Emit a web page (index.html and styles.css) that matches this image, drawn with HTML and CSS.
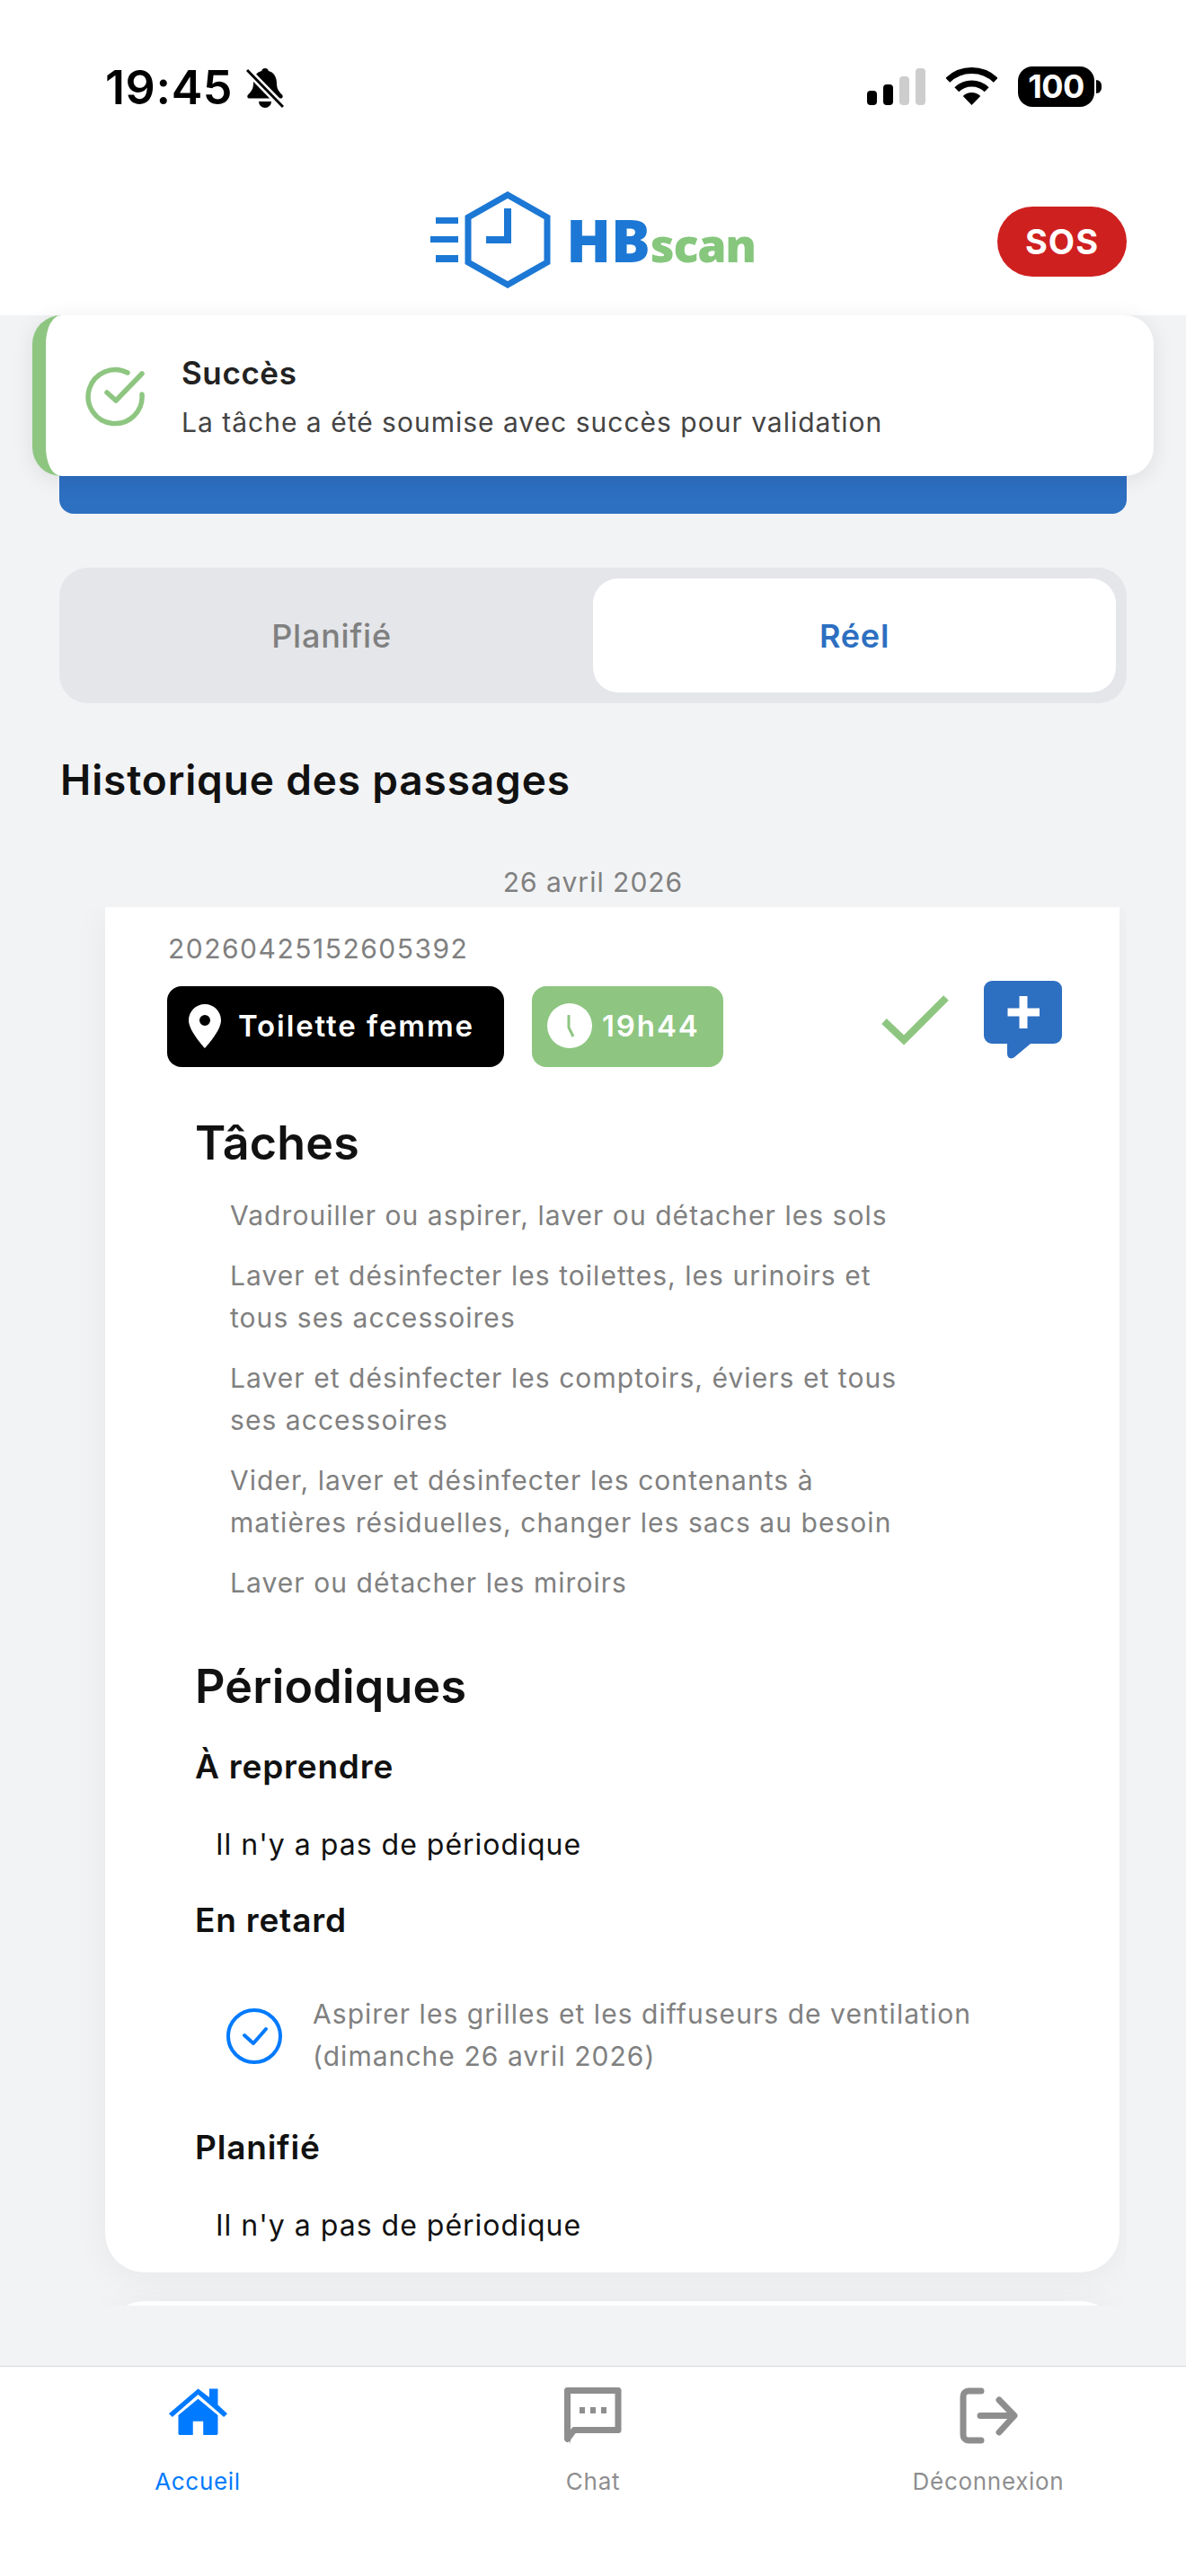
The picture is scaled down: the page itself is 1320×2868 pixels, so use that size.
FILE: index.html
```html
<!DOCTYPE html>
<html lang="fr">
<head>
<meta charset="utf-8">
<title>HBscan</title>
<link rel="stylesheet" href="styles.css">
</head>
<body>
<div class="app">
  <header class="top">
    <div class="status">
      <div class="status-left">
        <span class="time">19:45</span>
        <svg class="bell" viewBox="0 0 42 46"><path d="M21 1c-2 0-3.500 1.200-3.800 3C11 5.500 8 11 8 18c0 6-2.500 9-6 12.500-1 1-1 4 1 4h36c2 0 2-3 1-4C36.500 27 34 24 34 18c0-7-3-12.500-9.200-14-.3-1.800-1.800-3-3.800-3z"/><path d="M14 38a7 7 0 0 0 14 0z"/><path d="M1 3l40 41" stroke="#fff" stroke-width="8"/><path d="M1 3l40 41" stroke="#000" stroke-width="3"/></svg>
      </div>
      <div class="status-right">
        <div class="signal"><i class="bar b1"></i><i class="bar b2"></i><i class="bar b3 off"></i><i class="bar b4 off"></i></div>
        <svg class="wifi" viewBox="0 0 57 42"><path d="M1.800 14.300A38.500 38.500 0 0 1 55.200 14.300M11.800 24.700A24 24 0 0 1 45.200 24.700" fill="none" stroke="#000" stroke-width="7"/><path d="M28.500 42L18.800 32A14 14 0 0 1 38.200 32z"/></svg>
        <div class="battery"><span class="battery-body">100</span><i class="battery-nub"></i></div>
      </div>
    </div>
    <div class="brand-row">
      <div class="logo">
        <svg class="logo-mark" viewBox="0 0 134 108"><path d="M86 4l44 25v50l-44 25-44-25V29z" fill="none" stroke="#1c78d4" stroke-width="7"/><path d="M82 19h8v39H62v-8h20z" fill="#1c78d4"/><rect x="6" y="29" width="25" height="7" fill="#1c78d4"/><rect x="0" y="50" width="31" height="7" fill="#1c78d4"/><rect x="6" y="71" width="25" height="8" fill="#1c78d4"/></svg>
        <span class="logo-text"><span class="logo-hb">HB</span><span class="logo-scan">scan</span></span>
      </div>
      <button class="sos">SOS</button>
    </div>
  </header>

  <div class="toast">
    <svg class="toast-icon" viewBox="0 0 68 68"><path d="M47 8A30 30 0 1 0 63 32" fill="none" stroke="#8ec681" stroke-width="5.500" stroke-linecap="round"/><path d="M24 30l10 9 29-30" fill="none" stroke="#8ec681" stroke-width="5.500" stroke-linecap="round" stroke-linejoin="round"/></svg>
    <div class="toast-text">
      <div class="toast-title">Succès</div>
      <div class="toast-msg">La tâche a été soumise avec succès pour validation</div>
    </div>
  </div>

  <main class="main">
    <div class="blue-bar"></div>
    <div class="segment">
      <div class="seg-item">Planifié</div>
      <div class="seg-item active">Réel</div>
    </div>
    <h1 class="history-title">Historique des passages</h1>
    <div class="date">26 avril 2026</div>
    <div class="list">
      <article class="card">
        <div class="card-id">20260425152605392</div>
        <div class="pill-row">
          <div class="pill pill-black">
            <svg class="pin" viewBox="0 0 36 49"><path fill="#fff" fill-rule="evenodd" d="M18 0C8 0 0 8 0 18c0 12 18 31 18 31s18-19 18-31C36 8 28 0 18 0zm0 12a6 6 0 1 1 0 12 6 6 0 0 1 0-12z"/></svg>
            <span>Toilette femme</span>
          </div>
          <div class="pill pill-green">
            <svg class="clock" viewBox="0 0 50 50"><circle cx="25" cy="25" r="25" fill="#fff"/><path d="M24 13v14l5 10" fill="none" stroke="#8ec681" stroke-width="3"/></svg>
            <span>19h44</span>
          </div>
          <div class="card-actions">
            <svg class="done" viewBox="0 0 76 60"><path d="M3 30l22 21L72 4" fill="none" stroke="#8ec681" stroke-width="8"/></svg>
            <svg class="add-note" viewBox="0 0 87 87"><path fill="#2d6fc1" d="M9 0h69a9 9 0 0 1 9 9v52a9 9 0 0 1-9 9H52L34 85c-4 3-8 1-8-4V70H9a9 9 0 0 1-9-9V9a9 9 0 0 1 9-9z"/><path fill="#fff" d="M39.500 17h9v13.500H62v9H48.500V53h-9V39.500H26.500v-9h13z"/></svg>
          </div>
        </div>

        <section class="block">
          <h2 class="block-title">Tâches</h2>
          <ul class="tasks">
            <li>Vadrouiller ou aspirer, laver ou détacher les sols</li>
            <li>Laver et désinfecter les toilettes, les urinoirs et<br>tous ses accessoires</li>
            <li>Laver et désinfecter les comptoirs, éviers et tous<br>ses accessoires</li>
            <li>Vider, laver et désinfecter les contenants à<br>matières résiduelles, changer les sacs au besoin</li>
            <li>Laver ou détacher les miroirs</li>
          </ul>
        </section>

        <section class="block block-per">
          <h2 class="block-title">Périodiques</h2>
          <h3 class="sub sub-first">À reprendre</h3>
          <p class="none">Il n'y a pas de périodique</p>
          <h3 class="sub">En retard</h3>
          <div class="late">
            <svg class="late-check" viewBox="0 0 62 62"><circle cx="31" cy="31" r="29" fill="none" stroke="#007aff" stroke-width="4"/><path d="M20 30l10 9 14-16" fill="none" stroke="#007aff" stroke-width="4" stroke-linecap="round" stroke-linejoin="round"/></svg>
            <div class="late-text">Aspirer les grilles et les diffuseurs de ventilation<br>(dimanche 26 avril 2026)</div>
          </div>
          <h3 class="sub sub-plan">Planifié</h3>
          <p class="none">Il n'y a pas de périodique</p>
        </section>
      </article>
      <article class="card card-next"></article>
    </div>
  </main>

  <nav class="tabs">
    <div class="tab active">
      <svg class="tab-icon" viewBox="0 0 69 64"><path fill="#007aff" d="M35 0l13 10V0h10v19l11 10-4 4L35 7 5 33l-4-4z"/><path fill="#007aff" d="M35 12l23 19v21a2 2 0 0 1-2 2H41V38H29v16H14a2 2 0 0 1-2-2V31z"/></svg>
      <span>Accueil</span>
    </div>
    <div class="tab">
      <svg class="tab-icon" viewBox="0 0 64 64"><path d="M3.500 3.500h56.500v44H11l-7.500 10z" fill="none" stroke="#8e8e8f" stroke-width="7" stroke-linejoin="round"/><path d="M0 40h7v23z" fill="#8e8e8f"/><rect x="17" y="22" width="6" height="7" fill="#8e8e8f"/><rect x="29" y="22" width="6" height="7" fill="#8e8e8f"/><rect x="41" y="22" width="6" height="7" fill="#8e8e8f"/></svg>
      <span>Chat</span>
    </div>
    <div class="tab">
      <svg class="tab-icon" viewBox="0 0 64 64"><path d="M24 4H10a6 6 0 0 0-6 6v43a6 6 0 0 0 6 6h14" fill="none" stroke="#8e8e8f" stroke-width="7" stroke-linecap="round"/><path d="M23 31.500h37M44 14l17 17.500L44 50" fill="none" stroke="#8e8e8f" stroke-width="7" stroke-linecap="round" stroke-linejoin="round"/></svg>
      <span>Déconnexion</span>
    </div>
  </nav>
</div>
</body>
</html>
```
FILE: styles.css
```css
* { box-sizing: border-box; }
html, body { margin: 0; padding: 0; }
body { font-family: Inter, "Liberation Sans", sans-serif; background: #f2f3f5; color: #111; }

.app { position: relative; width: 1320px; height: 2868px; display: flex; flex-direction: column; overflow: hidden; }

.top { height: 351px; background: #fff; flex: none; }
.status { height: 213px; padding: 74px 94px 0 117px; display: flex; justify-content: space-between; align-items: flex-start; }
.status-left { display: flex; align-items: flex-start; gap: 15px; }
.time { font-size: 52px; line-height: 47px; font-weight: 600; color: #000; letter-spacing: .6px; }
.bell { width: 42px; height: 46px; margin-top: 1px; }
.status-right { display: flex; align-items: flex-start; }
.signal { display: flex; align-items: flex-end; gap: 7px; height: 43px; margin-right: 23px; }
.bar { display: block; width: 11px; background: #000; border-radius: 4px; }
.bar.off { background: #cdcdcd; }
.b1 { height: 16px; } .b2 { height: 23px; } .b3 { height: 32px; } .b4 { height: 41px; }
.wifi { width: 57px; height: 42px; margin-top: 1px; margin-right: 23px; }
.battery { display: flex; align-items: center; height: 45px; }
.battery-body { width: 85px; height: 45px; background: #000; color: #fff; border-radius: 16px; font-size: 36px; line-height: 45px; font-weight: 700; text-align: center; letter-spacing: -0.5px; }
.battery-nub { display: block; width: 6px; height: 15px; margin-left: 2px; background: #000; border-radius: 0 8px 8px 0; }

.brand-row { position: relative; height: 108px; display: flex; justify-content: center; }
.logo { display: flex; align-items: flex-start; }
.logo-mark { width: 134px; height: 108px; }
.logo-text { margin: 14px 0 0 17px; font-family: "Open Sans", sans-serif; font-weight: 800; font-size: 65px; line-height: 80px; }
.logo-hb { color: #1c78d4; }
.logo-scan { color: #86c77d; font-weight: 800; font-size: 52px; letter-spacing: -1.300px; }
.sos { position: absolute; right: 66px; top: 17px; width: 144px; height: 78px; border: 0; padding: 0; border-radius: 39px; background: #cf2020; color: #fff; font-family: Inter, sans-serif; font-size: 38px; letter-spacing: 1px; font-weight: 700; }

.toast { position: absolute; left: 36px; top: 351px; width: 1248px; height: 179px; background: #fff; border-left: 15px solid #8ec681; border-radius: 32px; box-shadow: 0 4px 24px rgba(0,0,0,.09); padding: 0 0 0 44px; display: flex; align-items: flex-start; z-index: 2; }
.toast-icon { width: 68px; height: 68px; margin-top: 56px; flex: none; }
.toast-text { margin: 44px 0 0 39px; }
.toast-title { font-size: 35px; line-height: 40px; font-weight: 600; color: #222; letter-spacing: .6px; }
.toast-msg { font-size: 30px; line-height: 44px; margin-top: 13px; color: #444; letter-spacing: 1px; }

.main { flex: 1; padding: 0 66px; min-height: 0; display: flex; flex-direction: column; }
.blue-bar { height: 221px; flex: none; background: #2d6fc1; border-radius: 0 0 16px 16px; }
.segment { margin-top: 60px; height: 151px; flex: none; padding: 12px; background: #e5e6ea; border-radius: 32px; display: grid; grid-template-columns: 1fr 582px; }
.seg-item { display: flex; align-items: center; justify-content: center; font-size: 36px; font-weight: 500; color: #808080; border-radius: 28px; letter-spacing: .8px; }
.seg-item.active { background: #fff; color: #2d6fc1; font-weight: 600; }

.history-title { margin: 55px 0 0 1px; font-size: 46px; line-height: 60px; font-weight: 600; color: #111; letter-spacing: .85px; }
.date { margin-top: 64px; text-align: center; font-size: 30px; line-height: 40px; color: #808080; letter-spacing: 1px; }
.list { margin-top: 8px; height: 1557px; flex: none; overflow: hidden; padding: 0 8px 0 51px; }
.card { background: #fff; height: 1520px; border-radius: 0 0 44px 44px; box-shadow: 0 4px 40px rgba(0,0,0,.05); }
.card-next { height: 200px; margin-top: 32px; border-radius: 44px; }

.card-id { padding: 26px 0 0 70px; font-size: 30px; line-height: 40px; color: #808080; letter-spacing: 1.500px; box-sizing: content-box; }
.pill-row { margin-top: 16px; padding: 0 64px 0 69px; height: 96px; display: flex; align-items: flex-end; gap: 31px; }
.pill { height: 90px; padding-bottom: 2px; border-radius: 16px; display: flex; align-items: center; color: #fff; font-weight: 600; font-size: 33px; letter-spacing: 1.900px; }
.pill-black { width: 375px; background: #000; padding-left: 24px; gap: 19px; }
.pill-green { width: 213px; background: #8ec681; padding-left: 17px; gap: 11px; }
.pin { width: 36px; height: 49px; }
.clock { width: 50px; height: 50px; }
.card-actions { margin-left: auto; height: 96px; display: flex; align-items: flex-start; gap: 38px; }
.done { width: 76px; height: 60px; margin-top: 15px; }
.add-note { width: 87px; height: 87px; }

.block { padding-left: 100px; }
.block-title { margin: 55px 0 0; font-size: 52px; line-height: 60px; font-weight: 600; color: #111; letter-spacing: .2px; }
.tasks { list-style: none; margin: 27px 0 0; padding: 0 0 0 39px; display: flex; flex-direction: column; gap: 19px; font-size: 30px; line-height: 47.500px; color: #808080; letter-spacing: 1.050px; }
.block-per .block-title { margin-top: 62px; }
.sub { margin: 0; font-size: 37px; line-height: 48px; font-weight: 600; color: #111; letter-spacing: .8px; }
.sub-first { margin-top: 35px; }
.none { margin: 39px 0 36px 23px; font-size: 32px; line-height: 48px; color: #111; letter-spacing: 1px; }
.late { margin: 57px 0 0 35px; display: flex; align-items: center; gap: 34px; }
.late-check { width: 62px; height: 62px; flex: none; margin-top: 2px; }
.late-text { font-size: 30px; line-height: 47px; color: #808080; letter-spacing: 1.050px; }
.sub-plan { margin-top: 54px; }

.tabs { height: 234px; flex: none; background: #fff; border-top: 1px solid #d9d9d9; display: grid; grid-template-columns: repeat(3, 1fr); }
.tab { display: flex; flex-direction: column; align-items: center; padding-top: 23px; color: #8e8e8f; font-size: 26px; line-height: 32px; letter-spacing: .7px; }
.tab.active { color: #007aff; }
.tab-icon { width: 66px; height: 64px; margin-bottom: 25px; }
```
